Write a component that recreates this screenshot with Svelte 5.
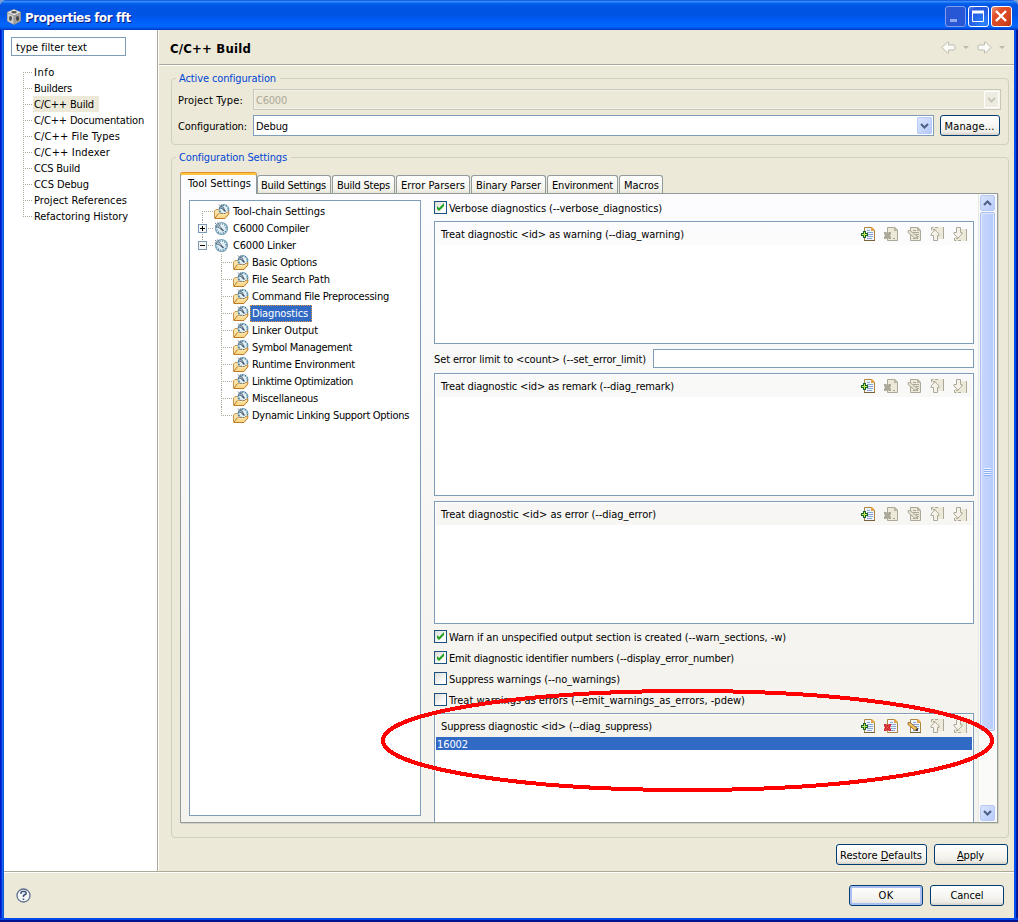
<script>
  // Adjusts letter spacing so a label takes up its designed width in pixels.
  function fit(node, width) {
    const natural = node.getBoundingClientRect().width;
    node.style.letterSpacing = (width - natural) / node.textContent.length + 'px';
  }

  const pages = [
    ['Info', 21], ['Builders', 38], ['C/C++ Build', 60], ['C/C++ Documentation', 110],
    ['C/C++ File Types', 86], ['C/C++ Indexer', 76], ['CCS Build', 46], ['CCS Debug', 55],
    ['Project References', 93], ['Refactoring History', 94]
  ];
  const tabs = [
    ['Tool Settings', 63, 77], ['Build Settings', 65, 74], ['Build Steps', 53, 63], ['Error Parsers', 64, 74],
    ['Binary Parser', 65, 75], ['Environment', 61, 71], ['Macros', 35, 44]
  ];
  const tools = [
    ['Tool-chain Settings', 92, 'folder', 0], ['C6000 Compiler', 76, 'gauge', 0, '+'], ['C6000 Linker', 63, 'gauge', 0, '-'],
    ['Basic Options', 65, 'folder', 1], ['File Search Path', 78, 'folder', 1], ['Command File Preprocessing', 137, 'folder', 1],
    ['Diagnostics', 56, 'folder', 1], ['Linker Output', 66, 'folder', 1], ['Symbol Management', 100, 'folder', 1],
    ['Runtime Environment', 103, 'folder', 1], ['Linktime Optimization', 101, 'folder', 1], ['Miscellaneous', 66, 'folder', 1],
    ['Dynamic Linking Support Options', 157, 'folder', 1]
  ];
  const checks = [
    ['Warn if an unspecified output section is created (--warn_sections, -w)', 337, true],
    ['Emit diagnostic identifier numbers (--display_error_number)', 285, true],
    ['Suppress warnings (--no_warnings)', 171, false],
    ['Treat warnings as errors (--emit_warnings_as_errors, -pdew)', 296, false]
  ];
</script>

{#snippet label(text, width)}<span class="t" use:fit={width}>{text}</span>{/snippet}

{#snippet gauge()}
  <svg width="16" height="16" viewBox="0 0 16 16" fill="none">
    <circle cx="7.500" cy="7.500" r="6" fill="#e2eff5" stroke="#7ba3b6" stroke-width="1.200" />
    <circle cx="7.500" cy="7.500" r="4.700" stroke="#3b7599" stroke-width="1.300" stroke-dasharray="1 1.460" />
    <path d="M1 2l6 5.500M3.500 1.500l4 6M1 4.500l6 3.500" stroke="#5b6f82" stroke-width=".9" />
    <path d="M2.500 3l4 4" stroke="#d8e1e6" stroke-width=".7" />
    <path d="M7 7.500l2.500 2.500" stroke="#40566d" stroke-width="1.500" />
  </svg>
{/snippet}

{#snippet folder()}
  <svg width="16" height="16" viewBox="0 0 16 16" fill="none">
    <path d="M.5 14V7L2 5.500h4V9h6" fill="#f9e3ab" stroke="#c9954a" />
    <circle cx="10" cy="5.500" r="5" fill="#e2eff5" stroke="#86aebf" />
    <circle cx="10" cy="5.500" r="4.300" stroke="#2f6d93" stroke-width="1.400" stroke-dasharray="1.100 1.600" />
    <path d="M5 .500l5 5M7.500 .500l3 5M5 3l5 3" stroke="#52677c" stroke-width=".9" />
    <path d="M9.500 5.500l2 2" stroke="#3e536a" stroke-width="1.500" />
    <path d="M.8 14.500L4 10h7l3.800-2.500v2.500L11 14.500z" fill="#fad98b" stroke="#bd7c2a" />
    <path d="M4.500 10.700h6.500l2.500-1.600" stroke="#fff1c6" />
  </svg>
{/snippet}

{#snippet chevron(up = false)}
  <svg width="9" height="6" viewBox="0 0 9 6" fill="none"><path d={up ? 'M1 5l3.5-3.5L8 5' : 'M1 1l3.5 3.5L8 1'} stroke="currentColor" stroke-width="2.1" /></svg>
{/snippet}

{#snippet page(on)}
  <path d="M3.500 14.500V1.500h7l3 3v10z" fill={on ? '#f1f6fe' : '#ece9d8'} stroke={on ? '#aa863e' : '#aca899'} />
  <path d="M10 1h1l3 3v1h-4z" fill={on ? '#dda545' : '#b9b5a5'} />
  <path d="M6 4.500h3M6 6.500h6M6 8.500h6M6 10.500h6M6 12.500h5" stroke={on ? '#8ca5d2' : '#aca899'} />
  {#if on}<path d="M3 14.500h11" stroke="#746239" />{/if}
{/snippet}

{#snippet blankPage(on)}
  <path d="M3.500 14.500V1.500h7l3 3v10z" fill={on ? '#f1f6fe' : '#ece9d8'} stroke={on ? '#aa863e' : '#aca899'} />
  <path d="M10 1h1l3 3v1h-4z" fill={on ? '#dda545' : '#b9b5a5'} />
  {#if on}<path d="M6 4.500h3M7 6.500h5M7 8.500h5M7 10.500h5M6 12.500h5" stroke="#8ca5d2" />{:else}<path d="M9 12.500h2" stroke="#aca899" />{/if}
{/snippet}

{#snippet listTools(active)}
  <div class="tools">
    <svg width="16" height="16" viewBox="0 0 16 16" fill="none">
      {@render page(true)}
      <path d="M2 5h3v2h2v3H5v2H2v-2H0V7h2z" fill="#17652a" /><path d="M3 6h1v2h2v1H4v2H3V9H1V8h2z" fill="#c4e653" />
    </svg>
    <svg width="16" height="16" viewBox="0 0 16 16" fill="none">
      {@render blankPage(active)}
      <path d="M0 6h2l1.500 1L5 6h2v2L6 9.500 7 11v2H5l-1.500-1L2 13H0v-2l1-1.500L0 8z" fill={active ? '#cf242c' : '#aca899'} />
      {#if active}<path d="M1 7l5 5M6 7l-5 5" stroke="#ee6a62" stroke-width=".7" />{/if}
    </svg>
    <svg width="16" height="16" viewBox="0 0 16 16" fill="none">
      {@render page(active)}
      <path d="M1 4.500h2l7 5.500.500 2.500-3-.5L1 6.500z" fill={active ? '#f3c155' : '#e3e0cf'} stroke={active ? '#8d6a35' : '#aca899'} stroke-width=".9" />
      <path d="M8 12.500h3V10z" fill={active ? '#222' : '#aca899'} />
    </svg>
    {#each [false, true] as down}
      <svg width="16" height="16" viewBox="0 0 16 16" fill="none">
        <g transform={down ? 'matrix(1 0 0 -1 0 16)' : ''}>
          <path d="M1 1h13v12H8V5H1z" fill="#ece9d8" /><path d="M1.500 4V1.500h2M5 1.500h3M13.500 1v12M3 3.500h2" stroke="#aca899" />
          <path d="M5 3.800L9 8v1.500H7.500v5h-4v-5H1V8z" fill="#f5f3e9" stroke="#aca899" />
        </g>
      </svg>
    {/each}
  </div>
{/snippet}

{#snippet listBox(text, width, active, value)}
  <section class="list">
    <header>{@render label(text, width)}{@render listTools(active)}</header>
    <div class="items">{#if value}<div class="chosen">{@render label(value, 31)}</div>{/if}</div>
  </section>
{/snippet}

{#snippet check(text, width, on)}
  <div class="check">
    <i>{#if on}<svg width="9" height="9" viewBox="0 0 9 9"><path d="M1 3v3l2 2 5-5V0L3 5z" fill="#21a121" /></svg>{/if}</i>
    {@render label(text, width)}
  </div>
{/snippet}

{#snippet arrow()}
  <svg width="15" height="13" viewBox="0 0 15 13"><path d="M1 6.500L6.500 1h1v3H13l1 1v3l-1 1H7.500v3h-1z" fill="#fafaf6" stroke="#bdbbb0" /></svg>
{/snippet}

<div class="window">
  <div class="title">
    <svg class="cube" width="16" height="16" viewBox="0 0 16 16">
      <path d="M8 0l7 3v9l-7 4-7-4V3z" fill="#8a8a8a" /><path d="M8 .5l6.500 2.700L8 6.500 1.500 3.200z" fill="#e6e6e6" />
      <path d="M1.500 4L7.500 7v8.300L1.500 12z" fill="#cfcfcf" /><path d="M14.500 4l-6 3v8.300l6-3.300z" fill="#a2a2a2" />
      <ellipse cx="8" cy="3.300" rx="2.800" ry="1.300" fill="#555" /><ellipse cx="4.500" cy="9.500" rx="1.500" ry="2.400" fill="#555" /><ellipse cx="11.500" cy="9.500" rx="1.500" ry="2.400" fill="#444" />
    </svg>
    <b class="t" use:fit={105}>Properties for fft</b>
    <div class="controls">
      <i class="dim"><svg width="21" height="21"><path d="M5 14.500h7" stroke="#8ea9f0" stroke-width="3" /></svg></i>
      <i><svg width="21" height="21" fill="none"><path d="M4 6h12" stroke="#fff" stroke-width="3" /><path d="M4.500 5.500h11v10h-11z" stroke="#fff" /></svg></i>
      <i class="close"><svg width="21" height="21"><path d="M5 5l10 10M15 5L5 15" stroke="#fff" stroke-width="2.400" /></svg></i>
    </div>
  </div>

  <div class="body">
    <aside>
      <div class="filter">{@render label('type filter text', 71)}</div>
      <div class="pages">
        {#each pages as [name, w], i}
          <div class="page" class:end={i === 9} class:begin={i === 0}><span class="name" class:current={i === 2}>{@render label(name, w)}</span></div>
        {/each}
      </div>
    </aside>

    <main>
      <div class="heading">
        <b class="t" use:fit={81}>C/C++ Build</b>
        <div class="history">{@render arrow()}<i></i><span class="flip">{@render arrow()}</span><i></i></div>
      </div>
      <div class="content">
        <fieldset class="active">
          <legend>{@render label('Active configuration', 97)}</legend>
          <div class="field"><span class="caption">{@render label('Project Type:', 65)}</span>
            <div class="combo off">{@render label('C6000', 31)}<i>{@render chevron()}</i></div></div>
          <div class="field"><span class="caption">{@render label('Configuration:', 69)}</span>
            <div class="combo">{@render label('Debug', 32)}<i>{@render chevron()}</i></div>
            <button class="manage">{@render label('Manage...', 50)}</button></div>
        </fieldset>

        <fieldset class="settings">
          <legend>{@render label('Configuration Settings', 108)}</legend>
          <div class="tabs">
            {#each tabs as [name, w, size], i}
              <div class="tab" class:front={i === 0} style:width="{size}px">{@render label(name, w)}</div>
            {/each}
          </div>
          <div class="panel">
            <div class="tree">
              {#each tools as [name, w, icon, depth, toggle], i}
                <div class="node" class:child={depth} class:first={i === 0} class:tail={i === 12 || i === 2}>
                  <span class="branch">{#if toggle}<svg width="9" height="9" class="toggle" shape-rendering="crispEdges"><path d="M.5.5h8v8h-8z" fill="#f7f6f2" stroke="#7898b5" /><path d={toggle === '+' ? 'M2 4.500h5M4.500 2v5' : 'M2 4.500h5'} stroke="#000" /></svg>{/if}</span>
                  {#if icon === 'folder'}{@render folder()}{:else}{@render gauge()}{/if}
                  <span class="name" class:selected={i === 6}>{@render label(name, w)}</span>
                </div>
              {/each}
            </div>
            <div class="options">
              {@render check('Verbose diagnostics (--verbose_diagnostics)', 213, true)}
              {@render listBox('Treat diagnostic <id> as warning (--diag_warning)', 243, false)}
              <div class="limit">{@render label('Set error limit to <count> (--set_error_limit)', 212)}<div class="entry"></div></div>
              {@render listBox('Treat diagnostic <id> as remark (--diag_remark)', 233, false)}
              {@render listBox('Treat diagnostic <id> as error (--diag_error)', 215, false)}
              <div class="checks">{#each checks as [name, w, on]}{@render check(name, w, on)}{/each}</div>
              {@render listBox('Suppress diagnostic <id> (--diag_suppress)', 211, true, '16002')}
            </div>
            <div class="scroll">
              <div class="knob">{@render chevron(true)}</div>
              <div class="thumb"><i></i></div>
              <div class="knob down">{@render chevron()}</div>
            </div>
          </div>
        </fieldset>
        <div class="actions">
          <button class="restore"><span class="t" use:fit={82}>Restore <u>D</u>efaults</span></button>
          <button class="wide"><span class="t" use:fit={27}><u>A</u>pply</span></button>
        </div>
      </div>
    </main>
  </div>

  <footer>
    <svg width="15" height="15" viewBox="0 0 15 15" fill="none"><circle cx="7.500" cy="7.500" r="6.500" fill="#f4f6f8" stroke="#5f7190" stroke-width="1.300" /><path d="M5 6V4.500L6 3.500h3l1 1V6L7.500 7.500V9M7.500 10.500v1.500" stroke="#3c5379" stroke-width="1.500" /></svg>
    <div class="actions">
      <button class="wide ok">{@render label('OK', 15)}</button>
      <button class="wide">{@render label('Cancel', 33)}</button>
    </div>
  </footer>
  <svg class="mark" width="616" height="106" fill="none" shape-rendering="crispEdges"><ellipse cx="307.500" cy="52.500" rx="304.500" ry="49.500" stroke="#f00" stroke-width="4" /></svg>
</div>

<style>
  :global(body) { margin: 0; background: #7d9fd8; }
  * { box-sizing: border-box; }
  .window {
    position: relative; width: 1018px; height: 922px; padding: 0 4px 4px; overflow: hidden;
    display: flex; flex-direction: column; border-radius: 7px 7px 0 0; color: #000;
    font: 11px/16px "DejaVu Sans Condensed", "DejaVu Sans", sans-serif; font-stretch: condensed;
    background: linear-gradient(90deg, #0019c8 0 1px, #0831d9 1px 2px, #166aee 2px 3px, #0855dd 3px 4px, #0855dd 4px 1014px, #0050ee 1014px 1016px, #001da0 1016px 1017px, #00138c 1017px);
    box-shadow: inset 0 -2px #00138c, inset 0 -4px #0048e8;
  }
  .t { display: inline-block; white-space: pre; }
  svg { display: block; flex: none; }
  i { font-style: normal; }
  .title {
    height: 30px; margin: 0 -4px; padding: 3px 5px 0 6px; flex: none; display: flex; align-items: center;
    background: linear-gradient(#0a4fd8 0, #3d95ff 6%, #0663ee 10%, #0055e5 20%, #0054e3 50%, #005bf5 65%, #0066ff 84%, #0062f8 90%, #0048d8 96%, #0036c0);
  }
  .title b { margin: 2px 0 0 3px; color: #fff; font: bold 13px/20px "DejaVu Sans Condensed", "DejaVu Sans", sans-serif; text-shadow: 1px 1px #0a1883; }
  .controls { margin-left: auto; display: flex; gap: 2px; padding-right: 1px; }
  .controls i { width: 21px; height: 21px; border: 1px solid #fff; border-radius: 3px; background: radial-gradient(circle at 75% 85%, #2b83fb, #2454dc 75%, #5681ec); }
  .controls svg { margin: -1px; }
  .controls .dim { border-color: #809eee; background: #2857d5; }
  .controls .close { background: linear-gradient(135deg, #ee9379, #e1502b 30%, #d34520 75%, #b63211); }
  .body { height: 843px; flex: none; display: flex; border-bottom: 1px solid #fff; box-shadow: inset 0 -1px #aca899; background: #ece9d8; }
  aside { width: 155px; height: 841px; padding: 7px; background: #fff; border-right: 1px solid #fff; box-shadow: inset -1px 0 #aca899; }
  .filter { width: 115px; height: 19px; padding: 1px 4px; border: 1px solid #7f9db9; line-height: 18px; }
  .pages { margin: 8px 0 0 12px; }
  .page { height: 16px; display: flex; padding-left: 10px; line-height: 18px;
    background: repeating-linear-gradient(#aca899 0 1px, #0000 1px 2px) 0 0 / 1px 16px no-repeat, repeating-linear-gradient(90deg, #aca899 0 1px, #0000 1px 2px) 0 8px / 9px 1px no-repeat; }
  .page.begin { background-position: 0 8px, 0 8px; }
  .page.end { background-size: 1px 8px, 9px 1px; }
  .page .name { padding-left: 1px; }
  .page .current { width: 66px; background: #ece9d8; }
  main { flex: 1; height: 841px; }
  .heading { height: 36px; padding: 0 10px 0 11px; display: flex; justify-content: space-between; align-items: center; border-bottom: 1px solid #fff; box-shadow: inset 0 -1px #aca899; }
  .heading b { font-size: 13px; line-height: 20px; margin-top: 2px; }
  .history { display: flex; align-items: center; gap: 7px; }
  .history i { border: 3px solid #0000; border-top-color: #bbb9ae; border-bottom: 0; width: 5px; margin-right: 1px; }
  .history i:last-child { margin-right: -1px; }
  .flip { transform: scaleX(-1); }
  .content { padding: 6px 5px 0 12px; }
  fieldset { display: block; min-width: 0; margin: 0; padding: 0; border: 1px solid #d0d0bf; border-radius: 4px; }
  legend { margin-left: 4px; padding: 0 4px 0 3px; height: 12px; line-height: 14px; color: #0046d5; }
  .active { height: 73px; }
  .field { display: flex; height: 26px; padding-left: 6px; }
  .active .field:nth-of-type(1) { margin-top: 5px; }
  .caption { width: 75px; padding-top: 4px; }
  .combo { width: 681px; height: 21px; display: flex; justify-content: space-between; padding: 2px 1px 2px 2px; border: 1px solid #7f9db9; background: #fff; }
  .combo .t { line-height: 18px; }
  .combo i { width: 15px; height: 17px; margin-top: -1px; display: grid; place-items: center; border: 1px solid #b7cafa; border-radius: 1px; background: linear-gradient(135deg, #dae5ff, #b5c9fa); color: #4d6185; }
  .combo.off { width: 748px; border-color: #c9c7ba; background: #ece9d8; color: #aca899; box-shadow: inset 0 0 0 1px #f5f4ec; }
  .combo.off i { border-color: #fff; background: #eeece1; color: #c9c7ba; }
  button { height: 21px; padding: 0; display: flex; justify-content: center; font: inherit; line-height: 20px; color: #000; border: 1px solid #003c74; border-radius: 3px; background: linear-gradient(#fff, #f5f4ef 60%, #ecebe5 85%, #d6d0c5); }
  .manage { width: 60px; margin-left: 6px; padding-right: 1px; line-height: 21px; }
  .settings { margin-top: 6px; height: 687px; }
  .tabs { height: 20px; margin: 10px 0 0 8px; display: flex; align-items: flex-end; }
  .tab { height: 18px; margin-right: 1px; padding-left: 4px; line-height: 19px; border: 1px solid #919b9c; border-bottom: 0; border-radius: 3px 3px 0 0; background: linear-gradient(#fff, #f3f2ea 80%, #e6e4d8); flex: none; }
  .tab:nth-child(2) { padding-left: 3px; }
  .tab.front { height: 21px; margin: 0 0 -1px; position: relative; z-index: 1; padding-left: 7px; line-height: 17px; border-top: 2px solid #ffc73c; box-shadow: 0 -1px #e68b2c; background: #fcfcfe; }
  .panel { width: 818px; height: 630px; margin-left: 8px; padding-left: 8px; display: flex; overflow: hidden; border: 1px solid #919b9c; background: linear-gradient(#fcfcfe, #f4f3ee 80%); box-shadow: 1px 1px #d4d1c1; }
  .tree { width: 232px; height: 616px; margin-top: 6px; padding-top: 2px; border: 1px solid #7f9db9; background: #fff; }
  .node { height: 17px; margin-left: 12px; display: flex; align-items: center; line-height: 17px;
    background: repeating-linear-gradient(#aca899 0 1px, #0000 1px 2px) 0 0 / 1px 17px no-repeat, repeating-linear-gradient(90deg, #aca899 0 1px, #0000 1px 2px) 0 8px / 12px 1px no-repeat; }
  .node.child { margin-left: 31px; }
  .node.first { background-position: 0 8px, 0 8px; }
  .node.tail { background-size: 1px 8px, 12px 1px; }
  .branch { width: 12px; flex: none; }
  .toggle { margin-left: -4px; }
  .node .name { margin-left: 1px; padding: 0 2px; height: 17px; }
  .node .selected { width: 62px; color: #fff; background: #316ac5; outline: 1px dotted #e69b38; outline-offset: -1px; }
  .options { width: 541px; margin-left: 13px; padding-top: 7px; flex: none; }
  .check { display: flex; height: 21px; }
  .check i { width: 13px; height: 13px; margin-right: 2px; display: grid; place-items: center; border: 1px solid #1c5180; background: linear-gradient(135deg, #dcdcd7, #fff 80%); }
  .check .t { line-height: 16px; }
  .check:first-child { height: 20px; }
  .list { width: 540px; height: 123px; display: flex; flex-direction: column; border: 1px solid #7f9db9; }
  .list header { height: 23px; flex: none; padding: 0 3px 0 5px; display: flex; justify-content: space-between; align-items: center; border: 1px solid #fff; border-bottom: 0; }
  .list header .t { margin-top: 2px; }
  .tools { display: flex; gap: 7px; }
  .items { flex: 1; padding: 0 1px; background: #fff; }
  .chosen { height: 13px; padding-left: 1px; line-height: 15px; color: #fff; background: #316ac5; }
  .limit { height: 29px; display: flex; align-items: center; justify-content: space-between; padding-right: 1px; }
  .limit .t { margin-top: 2px; }
  .entry { width: 321px; height: 19px; border: 1px solid #7f9db9; background: #fff; }
  .list + .list { margin-top: 5px; }
  .checks { height: 89px; padding-top: 6px; }
  .checks .check:first-child { height: 21px; }
  .scroll { width: 19px; height: 628px; margin-left: 3px; padding: 1px; border-left: 1px solid #e9e8e0; background: #fafaf8; display: flex; flex-direction: column; }
  .knob { width: 15px; height: 16px; flex: none; display: grid; place-items: center; color: #4d6185; border: 1px solid #fff; border-radius: 2px; outline: 1px solid #b6c8f3; outline-offset: -1px; background: linear-gradient(135deg, #d9e4ff, #b7cafa); }
  .thumb { width: 15px; height: 519px; margin-top: 1px; border: 1px solid #a9bdf0; border-radius: 2px; box-shadow: inset 0 0 0 1px #e1eaff; background: linear-gradient(90deg, #c8d7fc, #bccffc 70%, #b0c8f8); display: grid; place-items: center; }
  .thumb i { width: 7px; height: 8px; background: repeating-linear-gradient(#eef4fe 0 1px, #8cb0f8 1px 2px); }
  .down { margin-top: auto; }
  .actions { display: flex; gap: 7px; justify-content: flex-end; }
  .content > .actions { margin-top: 6px; padding-right: 1px; }
  .restore { width: 91px; }
  .content .actions button { line-height: 21px; padding-right: 1px; }
  .ok { box-shadow: inset 0 0 0 2px #a9c0f0; }
  .wide { width: 74px; }
  footer { height: 45px; padding: 0 10px 0 12px; display: flex; justify-content: space-between; align-items: center; background: #ece9d8; }
  .mark { position: absolute; left: 380px; top: 688px; pointer-events: none; }
</style>
